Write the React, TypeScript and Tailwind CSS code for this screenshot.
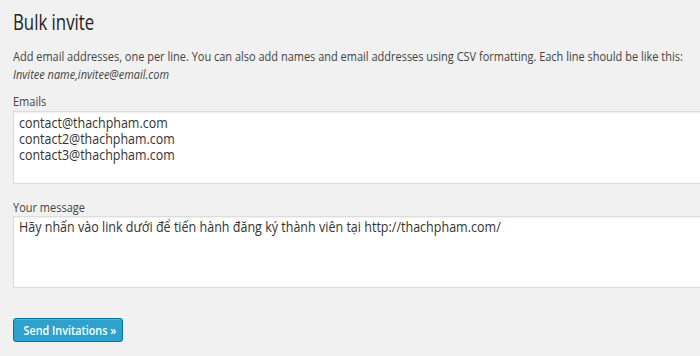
import React from "react";

export default function App() {
  return (
    <div
      className="w-[700px] h-[356px] overflow-hidden bg-[#f1f1f1] text-[#444] pl-[13px] pt-[6px]"
      style={{ fontFamily: '"Open Sans", "Noto Sans", sans-serif' }}
    >
      <h1 className="origin-left scale-x-[0.8] text-[21px] leading-[32px] text-[#222] font-normal whitespace-nowrap">
        Bulk invite
      </h1>
      <p className="origin-left scale-x-[0.845] mt-[9px] text-[13px] leading-[18px] text-[#444] whitespace-nowrap">
        Add email addresses, one per line. You can also add names and email addresses using CSV formatting. Each line should be like this:
        <br />
        <em>Invitee name,invitee@email.com</em>
      </p>
      <label className="block origin-left scale-x-[0.845] mt-[9px] text-[13px] leading-[18px] text-[#444]">Emails</label>
      <div className="mt-[1px] w-[720px] h-[73px] bg-white border border-[#ddd] shadow-[inset_0_1px_2px_rgba(0,0,0,0.07)] pl-[5px] pt-[3px] text-[14px] leading-[16px] text-[#333]">
        <div className="origin-left scale-x-[0.89] whitespace-nowrap">
          <div>contact@thachpham.com</div>
          <div>contact2@thachpham.com</div>
          <div>contact3@thachpham.com</div>
        </div>
      </div>
      <label className="block origin-left scale-x-[0.845] mt-[14px] text-[13px] leading-[18px] text-[#444]">Your message</label>
      <div className="w-[720px] h-[72px] bg-white border border-[#ddd] shadow-[inset_0_1px_2px_rgba(0,0,0,0.07)] pl-[5px] pt-[2px] text-[14px] leading-[16px] text-[#333]">
        <div className="origin-left scale-x-[0.895] whitespace-nowrap">
          Hãy nhấn vào link dưới để tiến hành đăng ký thành viên tại http://thachpham.com/
        </div>
      </div>
      <button className="mt-[30px] w-[110px] h-[24px] rounded-[3px] bg-[#2ea2cc] border border-[#0074a2] shadow-[inset_0_1px_0_rgba(120,200,230,0.5)] text-white text-[13px] font-semibold leading-[22px] text-center whitespace-nowrap">
        <span className="inline-block scale-x-[0.83]">Send Invitations »</span>
      </button>
    </div>
  );
}
